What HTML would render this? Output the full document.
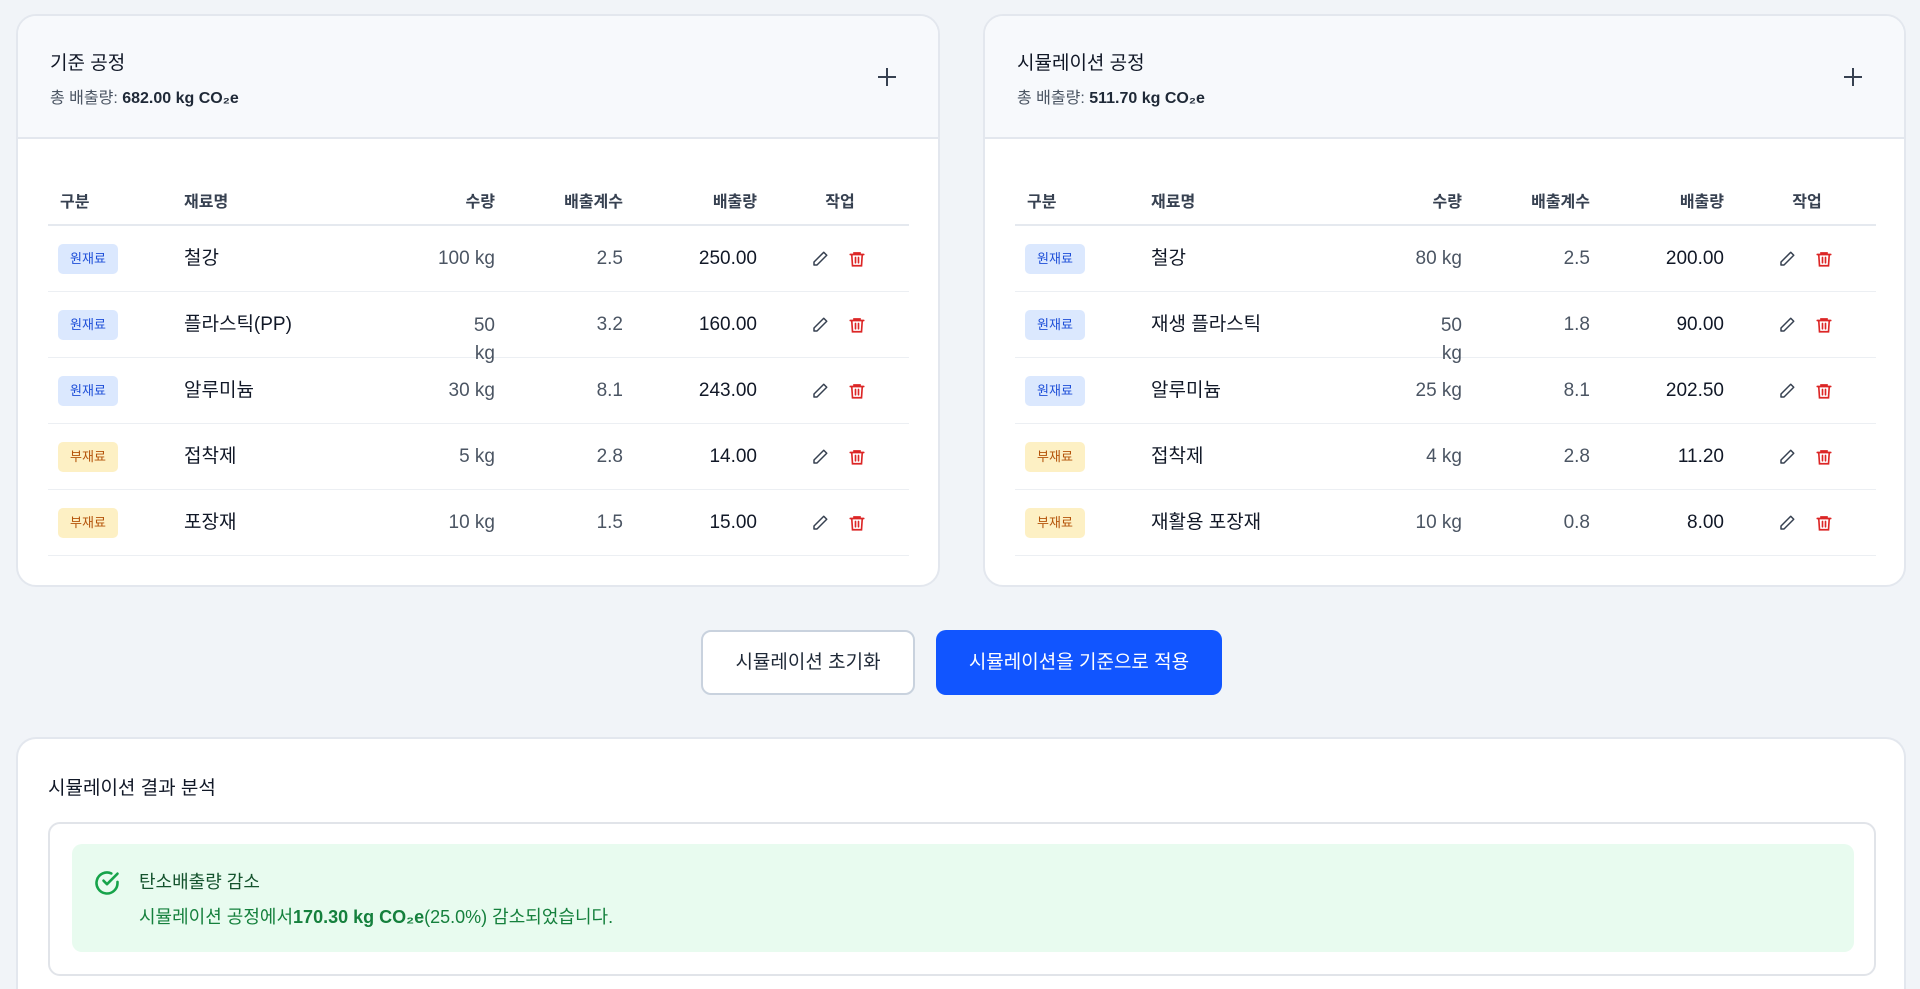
<!DOCTYPE html>
<html style="height:989px;overflow:hidden"><head><meta charset="utf-8"><style>
*{box-sizing:border-box;margin:0;padding:0}
body{width:1920px;height:989px;overflow:hidden;background:#f1f4f8;font-family:"Liberation Sans","Noto Sans CJK KR",sans-serif;color:#111827;position:relative}
.card{position:absolute;background:#fff;border:2px solid #e3e7ee;border-radius:20px;overflow:hidden}
.hd{position:absolute;left:0;right:0;top:0;height:123px;background:#f7f9fc;border-bottom:2px solid #e3e7ee}
.t1{position:absolute;left:32px;top:32px;font-size:19px}
.t2{position:absolute;left:32px;top:68px;font-size:16px;color:#4b5563}
.t2 b{color:#1f2937}
.plus{position:absolute;right:42px;top:52px;width:18px;height:18px}
.plus:before,.plus:after{content:"";position:absolute;background:#374151}
.plus:before{left:8px;top:0;width:2px;height:18px}
.plus:after{top:8px;left:0;height:2px;width:18px}
.th{position:absolute;top:172px;font-size:16px;font-weight:bold;color:#374151}
.hl{position:absolute;left:30px;width:861px;top:208px;height:2px;background:#e5e9ef}
.row{position:absolute;left:30px;width:861px;height:66px;border-bottom:1.5px solid #eceff3}
.c{position:absolute;top:0;height:65px;line-height:65px;font-size:19px;white-space:nowrap}
.badge{position:absolute;left:10px;top:18px;width:60px;height:30px;border-radius:5px;font-size:13px;line-height:30px;text-align:center}
.raw{background:#dbe8fe;color:#1d4ed8}
.sub{background:#fdf0c4;color:#b45309}
.q{left:300px;width:147px;color:#4b5563;text-align:right}
.f{left:450px;width:125px;color:#4b5563;text-align:right}
.e{left:580px;width:129px;text-align:right}
.ic{position:absolute;top:24px}
svg{display:block}
</style></head><body>

<div class="card" style="left:16px;top:14px;width:924px;height:573px">
 <div class="hd"><div class="t1">기준 공정</div><div class="t2">총 배출량: <b>682.00 kg CO₂e</b></div><div class="plus"></div></div>
 <div class="th" style="left:42px">구분</div><div class="th" style="left:166px">재료명</div>
 <div class="th" style="left:400px;width:77px;text-align:right">수량</div>
 <div class="th" style="left:500px;width:105px;text-align:right">배출계수</div>
 <div class="th" style="left:640px;width:99px;text-align:right">배출량</div>
 <div class="th" style="left:797px;width:50px;text-align:center">작업</div>
 <div class="hl"></div>
 <div class="row" style="top:210px"><div class="badge raw">원재료</div><div class="c" style="left:136px">철강</div><div class="c q">100 kg</div><div class="c f">2.5</div><div class="c e">250.00</div>
  <svg class="ic" style="left:763px" width="18" height="18" viewBox="0 0 24 24" fill="none" stroke="#374151" stroke-width="2" stroke-linecap="round" stroke-linejoin="round"><path d="M17 3l4 4L8 20H4v-4z"/></svg>
  <svg class="ic" style="left:800px" width="18" height="18" viewBox="0 0 24 24" fill="none" stroke="#dc2626" stroke-width="2.2" stroke-linecap="round"><path d="M3 6h18M8 6V4h8v2M5 6l1 15h12l1-15M10 10v7M14 10v7"/></svg></div>
 <div class="row" style="top:276px"><div class="badge raw">원재료</div><div class="c" style="left:136px">플라스틱(PP)</div><div class="c q" style="line-height:28px;top:20px;height:auto">50<br>kg</div><div class="c f">3.2</div><div class="c e">160.00</div>
  <svg class="ic" style="left:763px" width="18" height="18" viewBox="0 0 24 24" fill="none" stroke="#374151" stroke-width="2" stroke-linecap="round" stroke-linejoin="round"><path d="M17 3l4 4L8 20H4v-4z"/></svg>
  <svg class="ic" style="left:800px" width="18" height="18" viewBox="0 0 24 24" fill="none" stroke="#dc2626" stroke-width="2.2" stroke-linecap="round"><path d="M3 6h18M8 6V4h8v2M5 6l1 15h12l1-15M10 10v7M14 10v7"/></svg></div>
 <div class="row" style="top:342px"><div class="badge raw">원재료</div><div class="c" style="left:136px">알루미늄</div><div class="c q">30 kg</div><div class="c f">8.1</div><div class="c e">243.00</div>
  <svg class="ic" style="left:763px" width="18" height="18" viewBox="0 0 24 24" fill="none" stroke="#374151" stroke-width="2" stroke-linecap="round" stroke-linejoin="round"><path d="M17 3l4 4L8 20H4v-4z"/></svg>
  <svg class="ic" style="left:800px" width="18" height="18" viewBox="0 0 24 24" fill="none" stroke="#dc2626" stroke-width="2.2" stroke-linecap="round"><path d="M3 6h18M8 6V4h8v2M5 6l1 15h12l1-15M10 10v7M14 10v7"/></svg></div>
 <div class="row" style="top:408px"><div class="badge sub">부재료</div><div class="c" style="left:136px">접착제</div><div class="c q">5 kg</div><div class="c f">2.8</div><div class="c e">14.00</div>
  <svg class="ic" style="left:763px" width="18" height="18" viewBox="0 0 24 24" fill="none" stroke="#374151" stroke-width="2" stroke-linecap="round" stroke-linejoin="round"><path d="M17 3l4 4L8 20H4v-4z"/></svg>
  <svg class="ic" style="left:800px" width="18" height="18" viewBox="0 0 24 24" fill="none" stroke="#dc2626" stroke-width="2.2" stroke-linecap="round"><path d="M3 6h18M8 6V4h8v2M5 6l1 15h12l1-15M10 10v7M14 10v7"/></svg></div>
 <div class="row" style="top:474px"><div class="badge sub">부재료</div><div class="c" style="left:136px">포장재</div><div class="c q">10 kg</div><div class="c f">1.5</div><div class="c e">15.00</div>
  <svg class="ic" style="left:763px" width="18" height="18" viewBox="0 0 24 24" fill="none" stroke="#374151" stroke-width="2" stroke-linecap="round" stroke-linejoin="round"><path d="M17 3l4 4L8 20H4v-4z"/></svg>
  <svg class="ic" style="left:800px" width="18" height="18" viewBox="0 0 24 24" fill="none" stroke="#dc2626" stroke-width="2.2" stroke-linecap="round"><path d="M3 6h18M8 6V4h8v2M5 6l1 15h12l1-15M10 10v7M14 10v7"/></svg></div>
</div>

<div class="card" style="left:983px;top:14px;width:923px;height:573px">
 <div class="hd"><div class="t1">시뮬레이션 공정</div><div class="t2">총 배출량: <b>511.70 kg CO₂e</b></div><div class="plus"></div></div>
 <div class="th" style="left:42px">구분</div><div class="th" style="left:166px">재료명</div>
 <div class="th" style="left:400px;width:77px;text-align:right">수량</div>
 <div class="th" style="left:500px;width:105px;text-align:right">배출계수</div>
 <div class="th" style="left:640px;width:99px;text-align:right">배출량</div>
 <div class="th" style="left:797px;width:50px;text-align:center">작업</div>
 <div class="hl"></div>
 <div class="row" style="top:210px"><div class="badge raw">원재료</div><div class="c" style="left:136px">철강</div><div class="c q">80 kg</div><div class="c f">2.5</div><div class="c e">200.00</div>
  <svg class="ic" style="left:763px" width="18" height="18" viewBox="0 0 24 24" fill="none" stroke="#374151" stroke-width="2" stroke-linecap="round" stroke-linejoin="round"><path d="M17 3l4 4L8 20H4v-4z"/></svg>
  <svg class="ic" style="left:800px" width="18" height="18" viewBox="0 0 24 24" fill="none" stroke="#dc2626" stroke-width="2.2" stroke-linecap="round"><path d="M3 6h18M8 6V4h8v2M5 6l1 15h12l1-15M10 10v7M14 10v7"/></svg></div>
 <div class="row" style="top:276px"><div class="badge raw">원재료</div><div class="c" style="left:136px">재생 플라스틱</div><div class="c q" style="line-height:28px;top:20px;height:auto">50<br>kg</div><div class="c f">1.8</div><div class="c e">90.00</div>
  <svg class="ic" style="left:763px" width="18" height="18" viewBox="0 0 24 24" fill="none" stroke="#374151" stroke-width="2" stroke-linecap="round" stroke-linejoin="round"><path d="M17 3l4 4L8 20H4v-4z"/></svg>
  <svg class="ic" style="left:800px" width="18" height="18" viewBox="0 0 24 24" fill="none" stroke="#dc2626" stroke-width="2.2" stroke-linecap="round"><path d="M3 6h18M8 6V4h8v2M5 6l1 15h12l1-15M10 10v7M14 10v7"/></svg></div>
 <div class="row" style="top:342px"><div class="badge raw">원재료</div><div class="c" style="left:136px">알루미늄</div><div class="c q">25 kg</div><div class="c f">8.1</div><div class="c e">202.50</div>
  <svg class="ic" style="left:763px" width="18" height="18" viewBox="0 0 24 24" fill="none" stroke="#374151" stroke-width="2" stroke-linecap="round" stroke-linejoin="round"><path d="M17 3l4 4L8 20H4v-4z"/></svg>
  <svg class="ic" style="left:800px" width="18" height="18" viewBox="0 0 24 24" fill="none" stroke="#dc2626" stroke-width="2.2" stroke-linecap="round"><path d="M3 6h18M8 6V4h8v2M5 6l1 15h12l1-15M10 10v7M14 10v7"/></svg></div>
 <div class="row" style="top:408px"><div class="badge sub">부재료</div><div class="c" style="left:136px">접착제</div><div class="c q">4 kg</div><div class="c f">2.8</div><div class="c e">11.20</div>
  <svg class="ic" style="left:763px" width="18" height="18" viewBox="0 0 24 24" fill="none" stroke="#374151" stroke-width="2" stroke-linecap="round" stroke-linejoin="round"><path d="M17 3l4 4L8 20H4v-4z"/></svg>
  <svg class="ic" style="left:800px" width="18" height="18" viewBox="0 0 24 24" fill="none" stroke="#dc2626" stroke-width="2.2" stroke-linecap="round"><path d="M3 6h18M8 6V4h8v2M5 6l1 15h12l1-15M10 10v7M14 10v7"/></svg></div>
 <div class="row" style="top:474px"><div class="badge sub">부재료</div><div class="c" style="left:136px">재활용 포장재</div><div class="c q">10 kg</div><div class="c f">0.8</div><div class="c e">8.00</div>
  <svg class="ic" style="left:763px" width="18" height="18" viewBox="0 0 24 24" fill="none" stroke="#374151" stroke-width="2" stroke-linecap="round" stroke-linejoin="round"><path d="M17 3l4 4L8 20H4v-4z"/></svg>
  <svg class="ic" style="left:800px" width="18" height="18" viewBox="0 0 24 24" fill="none" stroke="#dc2626" stroke-width="2.2" stroke-linecap="round"><path d="M3 6h18M8 6V4h8v2M5 6l1 15h12l1-15M10 10v7M14 10v7"/></svg></div>
</div>

<div style="position:absolute;left:701px;top:630px;width:214px;height:65px;border:2px solid #c9d2de;border-radius:10px;background:#fff;font-size:19px;line-height:61px;text-align:center;color:#1f2937">시뮬레이션 초기화</div>
<div style="position:absolute;left:936px;top:630px;width:286px;height:65px;border-radius:10px;background:#1155ff;font-size:19px;line-height:65px;text-align:center;color:#fff">시뮬레이션을 기준으로 적용</div>

<div class="card" style="left:16px;top:737px;width:1890px;height:252px;border-bottom:none;border-radius:20px 20px 0 0">
 <div style="position:absolute;left:30px;top:34px;font-size:19px">시뮬레이션 결과 분석</div>
 <div style="position:absolute;left:30px;top:83px;width:1828px;height:154px;border:2px solid #e1e4e9;border-radius:12px">
  <div style="position:absolute;left:22px;top:20px;width:1782px;height:108px;background:#e8fbef;border-radius:10px">
   <svg style="position:absolute;left:21px;top:25px" width="28" height="28" viewBox="0 0 24 24" fill="none" stroke="#16a34a" stroke-width="2.2" stroke-linecap="round" stroke-linejoin="round"><path d="M21 11.1V12a9 9 0 1 1-5.3-8.2"/><path d="M21 4L12 13l-3-3"/></svg>
   <div style="position:absolute;left:67px;top:24px;font-size:18px;color:#14532d">탄소배출량 감소</div>
   <div style="position:absolute;left:67px;top:59px;font-size:18px;color:#15803d">시뮬레이션 공정에서<b>170.30 kg CO₂e</b>(25.0%) 감소되었습니다.</div>
  </div>
 </div>
</div>
</body></html>
